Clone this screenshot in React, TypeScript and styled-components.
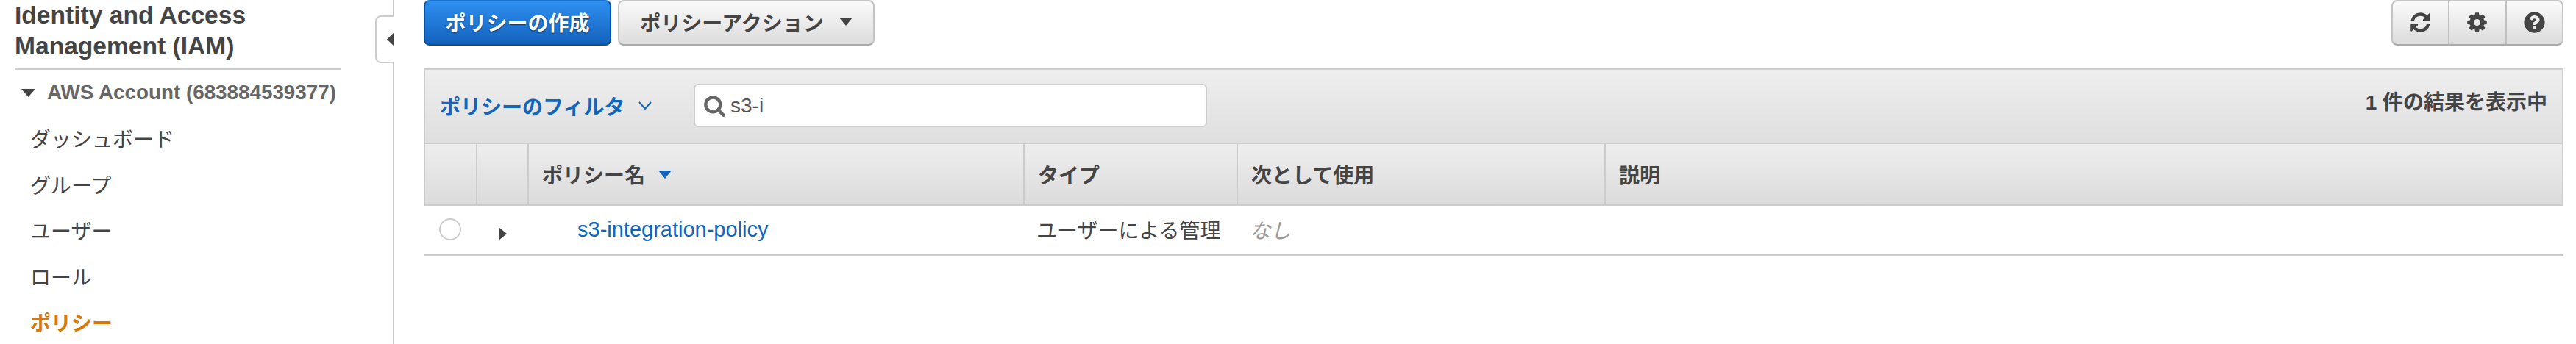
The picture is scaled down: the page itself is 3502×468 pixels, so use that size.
import styled, { createGlobalStyle } from "styled-components";

const FONT = `"Liberation Sans", "Noto Sans CJK JP", sans-serif`;
const HEADER_COLUMNS = "69px 70px 674px 290px 500px 1fr";
const ROW_COLUMNS = "71px 70px 674px 290px 500px 1fr";

const navItems = ["ダッシュボード", "グループ", "ユーザー", "ロール", "ポリシー"];
const ACTIVE_ITEM = "ポリシー";

// font-awesome 4 glyphs, the console still uses these
const REFRESH =
  "M1639 1056q0 5-1 7-64 268-268 434.5t-478 166.5q-146 0-282.5-55t-243.5-157l-129 129q-19 19-45 19t-45-19-19-45v-448q0-26 19-45t45-19h448q26 0 45 19t19 45-19 45l-137 137q71 66 161 102t187 36q134 0 250-65t186-179q11-17 53-117 8-23 30-23h192q13 0 22.5 9.5t9.5 22.5zm25-800v448q0 26-19 45t-45 19h-448q-26 0-45-19t-19-45 19-45l138-138q-148-137-349-137-134 0-250 65t-186 179q-11 17-53 117-8 23-30 23h-199q-13 0-22.5-9.5t-9.5-22.5v-7q65-268 270-434.5t480-166.5q146 0 284 55.5t245 156.5l130-129q19-19 45-19t45 19 19 45z";
const COG =
  "M1152 896q0-106-75-181t-181-75-181 75-75 181 75 181 181 75 181-75 75-181zm512-109v222q0 12-8 23t-20 13l-185 28q-19 54-39 91 35 50 107 138 10 12 10 25t-9 23q-27 37-99 108t-94 71q-12 0-26-9l-138-108q-44 23-91 38-16 136-29 186-7 28-36 28h-222q-14 0-24.5-8.5t-11.5-21.5l-28-184q-49-16-90-37l-141 107q-10 9-25 9-14 0-25-11-126-114-165-168-7-10-7-23 0-12 8-23 15-21 51-66.5t54-70.5q-27-50-41-99l-183-27q-13-2-21-12.5t-8-23.5v-222q0-12 8-23t19-13l186-28q14-46 39-92-40-57-107-138-10-12-10-24 0-10 9-23 26-36 98.5-107.5t94.5-71.5q13 0 26 10l138 107q44-23 91-38 16-136 29-186 7-28 36-28h222q14 0 24.5 8.5t11.5 21.5l28 184q49 16 90 37l142-107q9-9 24-9 13 0 25 10 129 119 165 170 7 8 7 22 0 12-8 23-15 21-51 66.5t-54 70.5q26 50 41 98l183 28q13 2 21 12.5t8 23.5z";
const QUESTION =
  "M1024 1376v-192q0-14-9-23t-23-9h-192q-14 0-23 9t-9 23v192q0 14 9 23t23 9h192q14 0 23-9t9-23zm256-672q0-88-55.5-163t-138.5-116-170-41q-243 0-371 213-15 24 8 42l132 100q7 6 19 6 16 0 25-12 53-68 86-92 34-24 86-24 48 0 85.5 26t37.5 59q0 38-20 61t-68 45q-63 28-115.5 86.5t-52.5 125.5v36q0 14 9 23t23 9h192q14 0 23-9t9-23q0-19 21.5-49.5t54.5-49.5q32-18 49-28.5t46-35 44.5-48 28-60.5 12.5-81zm384 192q0 209-103 385.5t-279.5 279.5-385.5 103-385.5-103-279.5-279.5-103-385.5 103-385.5 279.5-279.5 385.5-103 385.5 103 279.5 279.5 103 385.5z";
const SEARCH =
  "M1216 832q0-185-131.5-316.5t-316.5-131.5-316.5 131.5-131.5 316.5 131.5 316.5 316.5 131.5 316.5-131.5 131.5-316.5zm512 832q0 52-38 90t-90 38q-54 0-90-38l-343-342q-179 124-399 124-143 0-273.5-55.5t-225-150-150-225-55.5-273.5 55.5-273.5 150-225 225-150 273.5-55.5 273.5 55.5 225 150 150 225 55.5 273.5q0 220-124 399l343 343q37 37 37 90z";

const Glyph = ({ d, size, color }: GlyphProps) => (
  <svg width={size} height={size} viewBox="0 0 1792 1792" style={{ flex: "none" }}>
    <path d={d} fill={color} />
  </svg>
);

type GlyphProps = {
  d: string;
  size: number;
  color: string;
};

const Triangle = ({ dir, color, w, h }: TriangleProps) => (
  <svg width={w} height={h} viewBox="0 0 10 10" preserveAspectRatio="none" style={{ flex: "none" }}>
    <polygon
      fill={color}
      points={dir === "down" ? "0,0 10,0 5,10" : dir === "right" ? "0,0 10,5 0,10" : "10,0 0,5 10,10"}
    />
  </svg>
);

type TriangleProps = {
  dir: "down" | "right" | "left";
  color: string;
  w: number;
  h: number;
};

const App = () => {
  return (
    <Page>
      <GlobalStyle />
      <Sidebar>
        <Title>
          Identity and Access
          <br />
          Management (IAM)
        </Title>
        <Account>
          <Triangle dir="down" color="#444" w={19} h={11} />
          AWS Account (683884539377)
        </Account>
        <Nav>
          {navItems.map((item) => (
            <NavItem key={item} $active={item === ACTIVE_ITEM}>
              {item}
            </NavItem>
          ))}
        </Nav>
        <CollapseTab>
          <Triangle dir="left" color="#444" w={10} h={19} />
        </CollapseTab>
      </Sidebar>
      <Main>
        <Toolbar>
          <PrimaryButton>ポリシーの作成</PrimaryButton>
          <ActionButton>
            ポリシーアクション
            <Triangle dir="down" color="#444" w={18} h={11} />
          </ActionButton>
          <IconGroup>
            <IconButton>
              <Glyph d={REFRESH} size={31} color="#444" />
            </IconButton>
            <IconButton>
              <Glyph d={COG} size={31} color="#444" />
            </IconButton>
            <IconButton>
              <Glyph d={QUESTION} size={33} color="#444" />
            </IconButton>
          </IconGroup>
        </Toolbar>
        <Panel>
          <FilterBar>
            <FilterLink>
              ポリシーのフィルタ
              <svg width="18" height="11" viewBox="0 0 18 11" fill="none" stroke="#1166bb" strokeWidth="2">
                <polyline points="1,1 9,10 17,1" />
              </svg>
            </FilterLink>
            <SearchBox>
              <Glyph d={SEARCH} size={31} color="#666" />
              s3-i
            </SearchBox>
            <ResultCount>1 件の結果を表示中</ResultCount>
          </FilterBar>
          <HeaderRow>
            <HeaderCell />
            <HeaderCell />
            <HeaderCell>
              ポリシー名
              <Triangle dir="down" color="#1166bb" w={18} h={11} />
            </HeaderCell>
            <HeaderCell>タイプ</HeaderCell>
            <HeaderCell>次として使用</HeaderCell>
            <HeaderCell>説明</HeaderCell>
          </HeaderRow>
        </Panel>
        <DataRow>
          <RadioCell>
            <Radio />
          </RadioCell>
          <ExpandCell>
            <Triangle dir="right" color="#444" w={11} h={18} />
          </ExpandCell>
          <NameCell>s3-integration-policy</NameCell>
          <TextCell>ユーザーによる管理</TextCell>
          <MutedCell>なし</MutedCell>
          <TextCell />
        </DataRow>
      </Main>
    </Page>
  );
};

const GlobalStyle = createGlobalStyle`
  body {
    margin: 0;
    background: #fff;
    font-family: ${FONT};
  }
`;

const Page = styled.div`
  display: flex;
  width: 3502px;
  height: 468px;
  overflow: hidden;
  color: #444;
  font-size: 28px;
`;

const Sidebar = styled.aside`
  position: relative;
  flex: none;
  box-sizing: border-box;
  width: 536px;
  padding-left: 20px;
  border-right: 2px solid #ccc;
`;

const Title = styled.h1`
  box-sizing: border-box;
  width: 444px;
  height: 95px;
  margin: 0;
  border-bottom: 2px solid #ccc;
  font-size: 33.6px;
  line-height: 42px;
  font-weight: 700;
  color: #444;
`;

const Account = styled.div`
  display: flex;
  align-items: center;
  gap: 16px;
  height: 62px;
  padding-left: 9px;
  font-size: 27.8px;
  font-weight: 700;
  color: #666;
`;

const Nav = styled.nav`
  display: grid;
  grid-auto-rows: 62.5px;
  padding-left: 21px;
`;

const NavItem = styled.div<{ $active: boolean }>`
  display: flex;
  align-items: center;
  font-weight: ${({ $active }) => ($active ? 700 : 400)};
  color: ${({ $active }) => ($active ? "#dd7700" : "#444")};
`;

const CollapseTab = styled.div`
  position: absolute;
  top: 21px;
  right: -2px;
  box-sizing: border-box;
  display: flex;
  align-items: center;
  justify-content: flex-end;
  width: 26px;
  height: 65px;
  background: #fff;
  border: 2px solid #ccc;
  border-right: 0;
  border-radius: 8px 0 0 8px;
`;

const Main = styled.main`
  flex: none;
  box-sizing: border-box;
  width: 2949px;
  padding-left: 40px;
`;

const Toolbar = styled.div`
  display: flex;
  gap: 9px;
  height: 93px;
  align-items: flex-start;
`;

const Button = styled.button`
  box-sizing: border-box;
  display: flex;
  align-items: center;
  justify-content: center;
  height: 62px;
  padding: 0 0 3px;
  border-radius: 8px;
  font-family: ${FONT};
  font-size: 28px;
  font-weight: 700;
`;

const PrimaryButton = styled(Button)`
  width: 255px;
  color: #fff;
  background: linear-gradient(#2e8ff0, #1462bd);
  border: 2px solid #0b4f94;
  border-top-color: #1a72d0;
  text-shadow: 0 1px 2px rgba(0, 0, 0, 0.6);
`;

const ActionButton = styled(Button)`
  gap: 21px;
  width: 349px;
  color: #444;
  background: linear-gradient(#fafafa, #dcdcdc);
  border: 2px solid #c4c4c4;
  border-bottom-color: #aaa;
`;

const IconGroup = styled.div`
  display: flex;
  box-sizing: border-box;
  width: 234px;
  height: 62px;
  margin-left: auto;
  border: 2px solid #c4c4c4;
  border-bottom-color: #aaa;
  border-radius: 8px;
  background: linear-gradient(#fafafa, #dcdcdc);
`;

const IconButton = styled.div`
  flex: 1;
  display: flex;
  align-items: center;
  justify-content: center;
  padding-bottom: 2px;
  color: #444;

  & + & {
    border-left: 2px solid #c0c0c0;
  }
`;

const Panel = styled.section`
  box-sizing: border-box;
  border: 2px solid #ccc;
  border-bottom: 0;
  width: 2909px;
`;

const FilterBar = styled.div`
  display: flex;
  align-items: center;
  box-sizing: border-box;
  height: 99px;
  padding: 0 20px 2px;
  background: linear-gradient(#eeeeee, #dfdfdf);
`;

const FilterLink = styled.div`
  display: flex;
  align-items: center;
  gap: 19px;
  width: 345px;
  font-weight: 700;
  color: #1166bb;
`;

const SearchBox = styled.div`
  display: flex;
  align-items: center;
  gap: 6px;
  box-sizing: border-box;
  width: 698px;
  height: 59px;
  padding-left: 11px;
  background: #fff;
  border: 2px solid #ccc;
  border-radius: 6px;
  color: #555;
`;

const ResultCount = styled.div`
  margin-left: auto;
  padding-bottom: 14px;
  font-weight: 700;
  color: #444;
`;

const HeaderRow = styled.div`
  display: grid;
  grid-template-columns: ${HEADER_COLUMNS};
  height: 86px;
  border-top: 2px solid #ccc;
  border-bottom: 2px solid #ccc;
  box-sizing: border-box;
  background: linear-gradient(#eeeeee, #dbdbdb);
`;

const HeaderCell = styled.div`
  display: flex;
  align-items: center;
  gap: 18px;
  box-sizing: border-box;
  padding-left: 18px;
  font-weight: 700;
  color: #444;

  & + & {
    border-left: 2px solid #ccc;
  }
`;

const DataRow = styled.div`
  display: grid;
  grid-template-columns: ${ROW_COLUMNS};
  box-sizing: border-box;
  width: 2909px;
  height: 68px;
  border-bottom: 2px solid #ccc;
`;

const TextCell = styled.div`
  display: flex;
  align-items: center;
  padding-left: 18px;
  padding-bottom: 2px;
  color: #444;
`;

const RadioCell = styled(TextCell)`
  padding-left: 21px;
`;

const Radio = styled.span`
  box-sizing: border-box;
  width: 30px;
  height: 30px;
  border: 2px solid #ccc;
  border-radius: 50%;
  background: #fff;
`;

const ExpandCell = styled(TextCell)`
  padding: 10px 0 0 31px;
`;

const NameCell = styled(TextCell)`
  padding-left: 68px;
  font-size: 29px;
  color: #1166bb;
`;

const MutedCell = styled(TextCell)`
  font-style: italic;
  color: #999;
`;

export default App;
